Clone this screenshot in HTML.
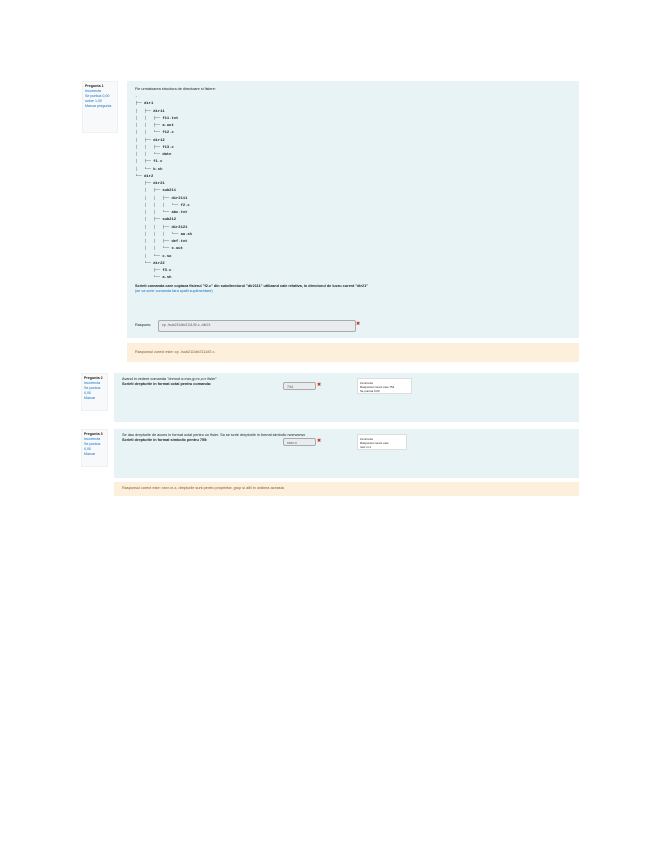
<!DOCTYPE html>
<html><head><meta charset="utf-8"><style>
body{margin:0;width:655px;height:848px;background:#fff;font-family:"Liberation Sans",sans-serif;position:relative;overflow:hidden}
.a{position:absolute}
.info{background:#f8f9fa;border:1px solid #eef0f2;font-size:3.6px;line-height:5px;padding:2px;box-sizing:border-box;color:#0f6fc5}
.info b{color:#222}
.c{background:#e7f3f5;font-size:3.8px;line-height:5px;color:#222;box-sizing:border-box;padding:6px 8px}
.fb{background:#fcefdc;font-size:3.8px;color:#7d5a29;box-sizing:border-box;padding:7px 8px}
pre{margin:2px 0 0;font-family:"Liberation Mono",monospace;font-size:3.8px;line-height:7.25px;color:#222;font-weight:bold}
.inp{position:absolute;background:#e9ecef;border:1px solid #aaa;border-radius:2px;font-size:3.6px;color:#555;padding:2px 3px;box-sizing:border-box}
.x{position:absolute;color:#ca3120;font-size:5px}
.tip{position:absolute;background:#fff;border:1px solid #ddd;font-size:2.9px;line-height:4px;padding:2px;box-sizing:border-box}
</style></head><body>
<div class="a info" style="left:82px;top:81px;width:36px;height:52px"><b>Pregunta 1</b><br>Incorrecta<br>Se puntúa 0,00 sobre 1,00<br>Marcar pregunta</div>
<div class="a c" style="left:127px;top:81px;width:452px;height:257px">
<div>Fie urmatoarea structura de directoare si fisiere:</div>
<pre>.
├── dir1
│   ├── dir11
│   │   ├── f11.txt
│   │   ├── a.out
│   │   └── f12.c
│   ├── dir12
│   │   ├── f13.c
│   │   └── date
│   ├── f1.c
│   └── b.sh
└── dir2
    ├── dir21
    │   ├── sub211
    │   │   ├── dir2111
    │   │   │   └── f2.c
    │   │   └── abc.txt
    │   ├── sub212
    │   │   ├── dir2121
    │   │   │   └── aa.sh
    │   │   ├── def.txt
    │   │   └── x.out
    │   └── c.so
    └── dir22
        ├── f3.c
        └── a.sh</pre>
<div style="margin-top:1px"><b>Scrieti comanda care copiaza fisierul "f2.c" din subdirectorul "dir2111" utilizand cale relativa, in directorul de lucru curent "dir21"</b><br><span style="color:#0f6fc5">(se va scrie comanda fara spatii suplimentare)</span></div>
<div style="position:absolute;left:8px;top:242px">Raspuns:</div>
<div class="inp" style="left:31px;top:239px;width:198px;height:12px">cp ./sub211/dir2111/f2.c ./dir21</div>
<div class="x" style="left:229px;top:241px">✖</div>
</div>
<div class="a fb" style="left:127px;top:343px;width:452px;height:19px">Raspunsul corect este: cp ./sub211/dir2111/f2.c .</div>

<div class="a info" style="left:81px;top:373px;width:27px;height:38px"><b>Pregunta 2</b><br>Incorrecta<br>Se puntúa 0,00<br>Marcar</div>
<div class="a c" style="left:114px;top:373px;width:465px;height:49px;padding:4px 8px">
<div>Avand in vedere comanda "chmod u=rwx,g=rx,o=r fisier"</div>
<div><b>Scrieti drepturile in format octal pentru comanda:</b></div>
<div class="inp" style="left:169px;top:9px;width:33px;height:8px">744</div>
<div class="x" style="left:203px;top:10px">✖</div>
<div class="tip" style="left:243px;top:5px;width:55px;height:16px">Incorrecta<br>Raspunsul corect este 754<br>Se puntua 0,00</div>
</div>

<div class="a info" style="left:81px;top:429px;width:27px;height:38px"><b>Pregunta 3</b><br>Incorrecta<br>Se puntúa 0,00<br>Marcar</div>
<div class="a c" style="left:114px;top:429px;width:465px;height:49px;padding:4px 8px">
<div>Se dau drepturile de acces in format octal pentru un fisier. Sa se scrie drepturile in format simbolic rwxrwxrwx</div>
<div><b>Scrieti drepturile in format simbolic pentru 755:</b></div>
<div class="inp" style="left:169px;top:9px;width:33px;height:8px">rwxr-x</div>
<div class="x" style="left:203px;top:10px">✖</div>
<div class="tip" style="left:243px;top:5px;width:50px;height:16px">Incorrecta<br>Raspunsul corect este<br>rwxr-xr-x</div>
</div>
<div class="a fb" style="left:114px;top:482px;width:465px;height:14px;padding:4px 8px">Raspunsul corect este: rwxr-xr-x, drepturile sunt pentru proprietar, grup si altii in ordinea aceasta</div>
</body></html>
